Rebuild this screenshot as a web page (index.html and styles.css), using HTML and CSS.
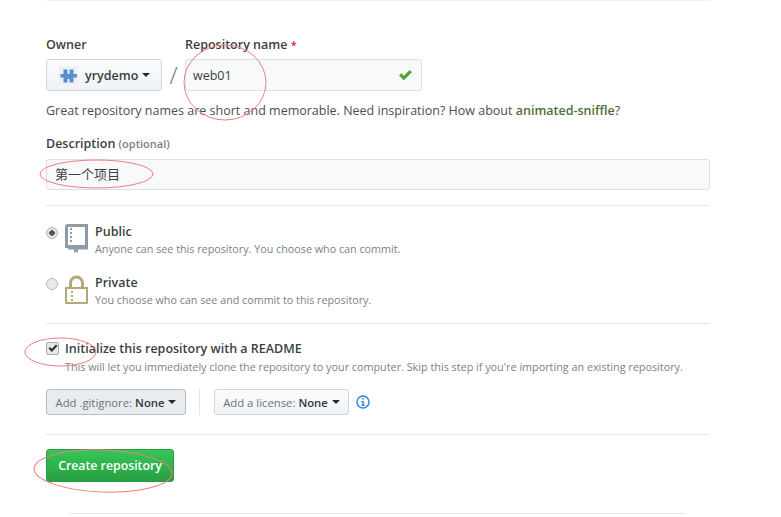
FILE: index.html
```html
<!DOCTYPE html>
<html lang="en">
<head>
<meta charset="UTF-8">
<title>Create a new repository</title>
<link rel="stylesheet" href="styles.css">
</head>
<body>

<form class="new-repo">
  <hr class="rule rule-top">

  <!-- Owner / name -->
  <div class="name-row">
    <div class="field">
      <div class="label">Owner</div>
      <button type="button" class="btn owner-btn">
        <svg class="avatar" width="19" height="19" viewBox="0 0 19 19">
          <rect width="19" height="19" fill="#eef0f3"/>
          <path d="M4.500 3.500h4v4.500h2V3.500h4v4.500H18v3.500h-3.500v5h-4v-3.500h-2v3.500h-4v-5H1.500V8h3z" fill="#5a8fce"/>
        </svg>
        <span>yrydemo</span><i class="caret"></i>
      </button>
    </div>
    <div class="slash">/</div>
    <div class="field">
      <div class="label">Repository name <span class="req">*</span></div>
      <div class="input name-input">
        <span>web01</span>
        <svg width="15" height="12" viewBox="0 0 16 13"><path d="M1 7l2.500-2.500 2.700 2.700L12.500 1 15 3.500 6.200 12.300z" fill="#4aa637"/></svg>
      </div>
    </div>
  </div>
  <p class="hint">Great repository names are short and memorable. Need inspiration? How about <b class="suggest">animated-sniffle</b>?</p>

  <!-- Description -->
  <div class="label desc-label">Description <span class="optional">(optional)</span></div>
  <div class="input desc-input">第一个项目</div>

  <hr class="rule rule-desc">

  <!-- Visibility -->
  <div class="choice choice-public">
    <span class="radio radio-on"></span>
    <svg class="choice-icon" width="23" height="29" viewBox="0 0 23 29">
      <path d="M0 3a3 3 0 0 1 3-3h20v24H0z M3 21h17V3H3z" fill="#8f9ba6" fill-rule="evenodd"/>
      <path d="M3 24h20v1.500H13V29l-2-1.500L9 29v-3.500H3z" fill="#8f9ba6"/>
      <path d="M5 4h2v2H5zM5 8h2v2H5zM5 12h2v2H5zM5 16h2v2H5z" fill="#8f9ba6"/>
    </svg>
    <div>
      <div class="choice-title">Public</div>
      <div class="note">Anyone can see this repository. You choose who can commit.</div>
    </div>
  </div>
  <div class="choice choice-private">
    <span class="radio"></span>
    <svg class="choice-icon" width="23" height="29" viewBox="0 0 23 29">
      <path d="M4 12V8a7.500 7.500 0 0 1 15 0v4h-3V8a4.500 4.500 0 0 0-9 0v4z" fill="#b5a877"/>
      <path d="M0 12h23v16a1 1 0 0 1-1 1H1a1 1 0 0 1-1-1z M2 14v13h19V14z" fill="#b5a877" fill-rule="evenodd"/>
      <path d="M6 16h2v2H6zM6 20h2v2H6zM6 24h2v2H6z" fill="#b5a877"/>
    </svg>
    <div>
      <div class="choice-title">Private</div>
      <div class="note">You choose who can see and commit to this repository.</div>
    </div>
  </div>

  <hr class="rule rule-vis">

  <!-- Readme -->
  <div class="readme">
    <span class="checkbox"><svg width="10" height="9" viewBox="0 0 10 9"><path d="M.5 4.500L2 3l1.800 1.800L8 .5 9.500 2 3.800 8z" fill="#333"/></svg></span>
    <span class="choice-title">Initialize this repository with a README</span>
  </div>
  <div class="note readme-note">This will let you immediately clone the repository to your computer. Skip this step if you're importing an existing repository.</div>

  <div class="extras">
    <button type="button" class="btn small active">Add .gitignore: <b>None</b><i class="caret"></i></button>
    <span class="divider"></span>
    <button type="button" class="btn small">Add a license: <b>None</b><i class="caret"></i></button>
    <svg class="info" width="14" height="14" viewBox="0 0 14 14">
      <circle cx="7" cy="7" r="6" fill="none" stroke="#2f80e0" stroke-width="1.400"/>
      <path d="M6.200 3h1.600v1.600H6.200zM5.500 6h2.300v3.700h.9V11H5.500V9.700h.8V7.200h-.8z" fill="#2f80e0"/>
    </svg>
  </div>

  <hr class="rule rule-readme">

  <button type="button" class="btn-create">Create repository</button>

  <hr class="rule rule-bottom">
</form>

<!-- red marker circles drawn over the screenshot -->
<svg class="marks" width="781" height="517" viewBox="0 0 781 517">
  <g fill="none" stroke="#ee7d80" stroke-width="1">
    <ellipse cx="225" cy="82.500" rx="41" ry="37.500"/>
    <ellipse cx="96.500" cy="174" rx="56.500" ry="14"/>
    <ellipse cx="60.500" cy="352" rx="35.500" ry="14"/>
    <ellipse cx="103" cy="471" rx="69" ry="21" transform="rotate(2 103 471)"/>
  </g>
</svg>

</body>
</html>
```

FILE: styles.css
```css
:root{
  --text:#3a3f44;
  --muted:#7a828a;
  --line:#e4e6e9;
}
*{box-sizing:border-box;}
html,body{height:517px; overflow:hidden;}
body{
  margin:0; background:#fff; color:var(--text); position:relative;
  font-family:"Open Sans","Noto Sans CJK SC",sans-serif; font-size:12.500px;
}
.new-repo{width:664px; margin-left:46px;}
.rule{border:0; border-top:1px solid var(--line); margin:0;}
.rule-top{border-color:#f0f1f2;}
.rule-desc{margin-top:15px;}
.rule-vis{margin-top:5px;}
.rule-readme{margin-top:19px;}
.rule-bottom{width:617px; margin:31px 0 0 23px;}

.name-row{display:flex; align-items:flex-end; margin-top:36px;}
.label{font-weight:600; line-height:16px; margin-bottom:6px;}
.req{color:#cb2431; font-size:11px;}
.slash{width:23px; text-align:center; font-size:24px; line-height:32px; color:#6a737d; font-weight:300;}
.btn{
  font:inherit; color:var(--text); cursor:pointer;
  display:flex; align-items:center;
  border:1px solid #d1d5da; border-radius:3px;
  background:linear-gradient(#fafbfc,#eff3f6);
}
.owner-btn{width:116px; height:32px; padding:0 12px; font-weight:600;}
.owner-btn span{margin-left:7px;}
.avatar{flex:none;}
.caret{
  display:inline-block; margin-left:4px;
  border:4px solid transparent; border-top-color:#24292e; border-bottom:0;
}
.input{
  border:1px solid #dcdfe3; border-radius:3px; background:#f8f9fb;
  display:flex; align-items:center; padding:0 8px;
}
.name-input{width:237px; height:32px; justify-content:space-between; padding:0 8px 0 7px;}
.hint{margin:11px 0 0; line-height:18px; color:#4a4f54;}
.suggest{font-weight:600; color:#4f6f35;}

.desc-label{margin-top:16px; margin-bottom:7px;}
.optional{font-size:11px; color:var(--muted);}
.desc-input{height:31px; padding-bottom:2px; font-size:13px;}

.choice{display:flex; align-items:flex-start; height:44px;}
.choice-public{margin-top:17px;}
.choice-private{margin-top:7px;}
.choice-icon{flex:none; margin:1px 7px 0 7px;}
.choice-title{font-weight:600; line-height:17px;}
.note{font-size:10.750px; line-height:16px; color:var(--muted); margin-top:1px;}
.radio{
  flex:none; width:12px; height:12px; margin-top:4px; border-radius:50%;
  border:1px solid #b5b5b5; background:#e9e9e9;
}
.radio-on{background:radial-gradient(circle,#555 0 2.500px,#e4e4e4 3px);}

.readme{display:flex; align-items:center; margin-top:16px;}
.checkbox{
  width:13px; height:13px; margin-right:6px; border:1px solid #aaa; border-radius:2px;
  background:#e8e8e8; display:flex; align-items:center; justify-content:center;
}
.readme-note{margin:2px 0 0 19px; font-size:10.800px;}

.extras{display:flex; align-items:center; margin-top:14px;}
.small{height:26px; padding:0 6px; font-size:11.300px; color:#6a737d;}
.small b{font-weight:600; color:#33383d; margin-left:3px;}
.small.active{width:140px; background:#e9ecef; border-color:#b8bec5; justify-content:center;}
.small:not(.active){width:135px; justify-content:center;}
.divider{width:1px; height:26px; background:var(--line); margin:0 14px 0 13px;}
.info{margin-left:7px;}

.btn-create{
  display:block; margin-top:14px; width:128px; height:33px; padding:0;
  font:inherit; font-size:12.300px; font-weight:600; color:#fff; cursor:pointer;
  border:1px solid #2a9b45; border-radius:3px;
  background:linear-gradient(#34c755,#279f43);
}

.marks{position:absolute; left:0; top:0; pointer-events:none;}
```
